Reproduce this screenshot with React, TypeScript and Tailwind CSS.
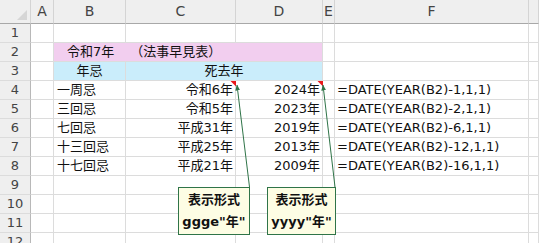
import type { ReactNode } from 'react'

const FONT = { fontFamily: '"DejaVu Sans", "Noto Sans CJK JP", sans-serif' }

const COLS = ['A', 'B', 'C', 'D', 'E', 'F', '']

const rows = [
  { b: '一周忌', c: '令和6年', d: '2024年', f: '=DATE(YEAR(B2)-1,1,1)' },
  { b: '三回忌', c: '令和5年', d: '2023年', f: '=DATE(YEAR(B2)-2,1,1)' },
  { b: '七回忌', c: '平成31年', d: '2019年', f: '=DATE(YEAR(B2)-6,1,1)' },
  { b: '十三回忌', c: '平成25年', d: '2013年', f: '=DATE(YEAR(B2)-12,1,1)' },
  { b: '十七回忌', c: '平成21年', d: '2009年', f: '=DATE(YEAR(B2)-16,1,1)' },
]

function Cell({ className = '', children }: { className?: string; children?: ReactNode }) {
  return (
    <div
      className={`flex h-[19px] items-center whitespace-nowrap border-r border-b border-[#dcdcdc] text-[13px] text-[#111] ${className}`}
    >
      {children}
    </div>
  )
}

function RowHead({ n }: { n: number }) {
  return (
    <div className="flex h-[19px] items-center justify-center border-r border-b border-r-[#b8b8b8] border-b-[#dcdcdc] bg-[#efefef] text-[13px] text-[#444]">
      {n}
    </div>
  )
}

function Blank() {
  return (
    <>
      <Cell />
      <Cell />
      <Cell />
      <Cell />
      <Cell />
      <Cell />
      <Cell />
    </>
  )
}

function Note({ left, width, text }: { left: string; width: string; text: string }) {
  return (
    <div
      className={`absolute top-[187px] ${left} ${width} flex h-[48px] flex-col items-center justify-center border border-[#2f7448] bg-[#fdfde4] text-[13px] leading-[22px] font-bold text-[#111]`}
    >
      <span>表示形式</span>
      <span>{text}</span>
    </div>
  )
}

export default function App() {
  return (
    <div className="relative h-[243px] w-[539px] overflow-hidden bg-white" style={FONT}>
      <div className="grid grid-cols-[31px_23px_72px_110px_87px_12px_194px_1fr]">
        <div className="relative h-[24px] border-r border-b border-r-[#d4d4d4] border-b-[#a8a8a8] bg-[#efefef]">
          <span className="absolute right-[3px] bottom-[3px] h-0 w-0 border-b-[10px] border-l-[10px] border-b-[#d6d6d6] border-l-transparent" />
        </div>
        {COLS.map((c, i) => (
          <div
            key={i}
            className="flex h-[24px] items-center justify-center border-r border-b border-r-[#d4d4d4] border-b-[#a8a8a8] bg-[#efefef] text-[14px] text-[#444]"
          >
            {c}
          </div>
        ))}

        <RowHead n={1} />
        <Blank />

        <RowHead n={2} />
        <Cell />
        <Cell className="col-span-3 border-r-[#dcdcdc] bg-[#f2ceef] pl-[13px]">
          令和7年<span className="w-[16px]" />（法事早見表）
        </Cell>
        <Cell />
        <Cell />
        <Cell />

        <RowHead n={3} />
        <Cell />
        <Cell className="justify-center bg-[#caedfb]">年忌</Cell>
        <Cell className="col-span-2 justify-center bg-[#caedfb]">死去年</Cell>
        <Cell />
        <Cell />
        <Cell />

        {rows.map((r, i) => (
          <div key={i} className="contents">
            <RowHead n={i + 4} />
            <Cell />
            <Cell className="pl-[3px]">{r.b}</Cell>
            <Cell className="justify-end pr-[2px]">{r.c}</Cell>
            <Cell className="justify-end pr-[2px]">{r.d}</Cell>
            <Cell />
            <Cell className="pl-[2px]">{r.f}</Cell>
            <Cell />
          </div>
        ))}

        {[9, 10, 11, 12].map((n) => (
          <div key={n} className="contents">
            <RowHead n={n} />
            <Blank />
          </div>
        ))}
      </div>

      <svg className="pointer-events-none absolute inset-0" width="539" height="243">
        <defs>
          <marker id="ah" viewBox="0 0 6 6" refX="5.5" refY="3" markerWidth="6" markerHeight="6" orient="auto" markerUnits="userSpaceOnUse">
            <path d="M0 0.6 L6 3 L0 5.4 Z" fill="#2f7448" />
          </marker>
        </defs>
        <polygon points="230.5,81 236,81 236,86.5" fill="#e8191b" />
        <polygon points="317.5,81 323,81 323,86.5" fill="#e8191b" />
        <line x1="249.5" y1="187" x2="237" y2="85" stroke="#2f7448" strokeWidth="1" markerEnd="url(#ah)" />
        <line x1="335" y1="187" x2="323" y2="85" stroke="#2f7448" strokeWidth="1" markerEnd="url(#ah)" />
      </svg>

      <Note left="left-[178px]" width="w-[72px]" text={'ggge"年"'} />
      <Note left="left-[267px]" width="w-[69px]" text={'yyyy"年"'} />
    </div>
  )
}
